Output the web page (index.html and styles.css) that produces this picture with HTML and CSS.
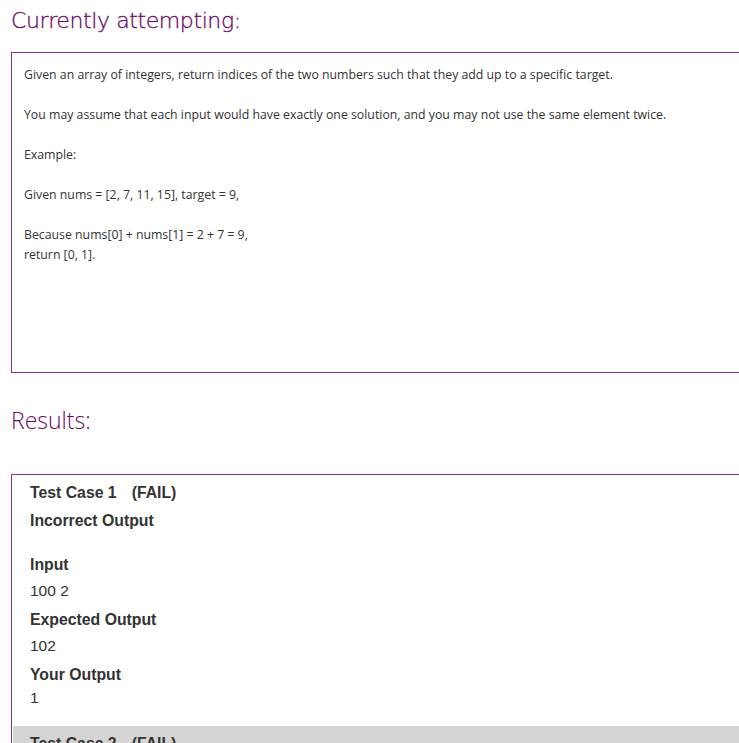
FILE: index.html
```html
<!DOCTYPE html>
<html>
<head>
<meta charset="utf-8">
<link rel="stylesheet" href="styles.css">
</head>
<body>
<h2 class="title">Currently attempting:</h2>
<div class="problem">
  <p>Given an array of integers, return indices of the two numbers such that they add up to a specific target.</p>
  <p>You may assume that each input would have exactly one solution, and you may not use the same element twice.</p>
  <p>Example:</p>
  <p>Given nums = [2, 7, 11, 15], target = 9,</p>
  <p>Because nums[0] + nums[1] = 2 + 7 = 9,<br>return [0, 1].</p>
</div>
<h2 class="results-title">Results:</h2>
<div class="results">
  <div class="case">
    <div class="case-head">Test Case 1<span class="status">(FAIL)</span></div>
    <div class="case-msg">Incorrect Output</div>
    <div class="label first">Input</div>
    <div class="value">100 2</div>
    <div class="label">Expected Output</div>
    <div class="value">102</div>
    <div class="label">Your Output</div>
    <div class="value last">1</div>
  </div>
  <div class="case alt">
    <div class="case-head">Test Case 2<span class="status">(FAIL)</span></div>
    <div class="case-msg">Incorrect Output</div>
  </div>
</div>
</body>
</html>
```
FILE: styles.css
```css
html, body {
  margin: 0;
  padding: 0;
  background: #fff;
  overflow: hidden;
}
body {
  padding-left: 11px;
}
.title {
  margin: 0;
  padding-top: 4px;
  height: 48px;
  font-family: "DejaVu Sans", sans-serif;
  font-weight: 200;
  font-size: 22px;
  line-height: 34px;
  color: #6a0862;
  letter-spacing: -0.4px;
  -webkit-text-stroke: 0.3px #6a0862;
}
.problem {
  border: 1px solid #8e2a8c;
  border-right: none;
  height: 321px;
  padding: 12px 12px 0 12px;
  box-sizing: border-box;
  font-family: "Open Sans", sans-serif;
  font-size: 12.3px;
  color: #333;
}
.problem p {
  margin: 0 0 20px 0;
  line-height: 20px;
}
.results-title {
  margin: 0;
  padding-top: 31px;
  height: 68px;
  box-sizing: border-box;
  font-family: "Open Sans", sans-serif;
  font-weight: 300;
  font-size: 23px;
  line-height: 32px;
  color: #6a0862;
}
.results {
  margin-top: 33px;
  border: 1px solid #8e2a8c;
  border-right: none;
  padding-left: 1px;
  font-family: "Liberation Sans", Arial, sans-serif;
  color: #333;
}
.case {
  padding: 8px 17px 18px 17px;
}
.case.alt {
  background: #d4d4d4;
}
.case-head, .case-msg, .label {
  font-weight: bold;
  font-size: 15.8px;
  line-height: 20px;
}
.status {
  margin-left: 15px;
}
.case-msg {
  margin-top: 8px;
}
.label {
  margin-top: 9px;
}
.label.first {
  margin-top: 24px;
}
.value {
  font-size: 15.5px;
  line-height: 20px;
  margin-top: 6px;
}
.value.last {
  margin-top: 3px;
}
```
